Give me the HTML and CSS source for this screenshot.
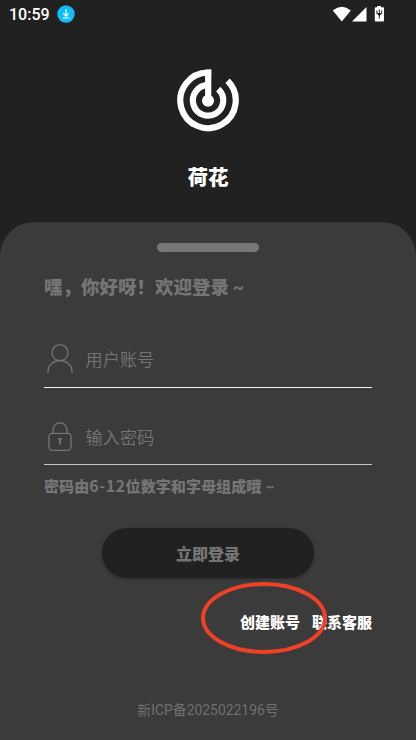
FILE: index.html
```
<!DOCTYPE html>
<html lang="zh-CN">
<head>
<meta charset="utf-8">
<title>荷花</title>
<link rel="stylesheet" href="styles.css">
</head>
<body>
<div class="screen">
  <header class="status">
    <span class="time">10:59</span>
    <svg class="download" viewBox="0 0 18 18"><circle cx="9" cy="9" r="8.7" fill="#10bdfb"/><path d="M9 4v7M6.2 8.3L9 11.1l2.8-2.8M5.6 13h6.8" fill="none" stroke="#fff" stroke-width="1.2"/></svg>
    <svg class="signals" viewBox="0 0 54 18"><path d="M.8 5.5Q9.8-1.9 18.8 5.5L9.8 16.4z" fill="#fff"/><path d="M34.5 2v14.4H20z" fill="#fff"/><path d="M45 2.2V1h4v1.2h2q1 0 1 1v12.2q0 1-1 1h-7.2q-1 0-1-1V3.2q0-1 1-1z" fill="#fff"/><path d="M47.3 4.5v9M44.9 5.5v3M49.7 5.5v3" fill="none" stroke="#222" stroke-width="1"/><path d="M44.4 8h5.8l-2.9 3.2z" fill="#222"/></svg>
  </header>
  <section class="brand">
    <svg class="logo" viewBox="-32 -32.4 64 64" fill="none" stroke="#fff" stroke-width="6.2">
      <path d="M3.2-27.7H0A27.7 27.7 0 1 0 19.6-19.6"/>
      <path d="M0-15.2A15.2 15.2 0 1 0 10.2-11.3"/>
      <path d="M.2-30.8V0"/>
      <circle cx="0" cy=".3" r="6" fill="#fff" stroke="none"/>
    </svg>
    <h1 class="name">荷花</h1>
  </section>
  <main class="panel">
    <div class="handle"></div>
    <h2 class="welcome">嘿，你好呀！欢迎登录<span class="tilde">~</span></h2>
    <div class="field">
      <svg class="icon" viewBox="0 0 28 32"><circle cx="14" cy="9.7" r="8"/><path d="M2 30v-1.5a12 11 0 0 1 24 0V30"/></svg>
      <span class="placeholder">用户账号</span>
    </div>
    <div class="field password">
      <svg class="icon" viewBox="0 0 28 32"><rect x="3" y="12.3" width="22" height="17" rx="3.5"/><path d="M7 12V8.8a7 7 0 0 1 14 0V12"/><path class="key" d="M14 17v6.5M12.3 18h3.4"/></svg>
      <span class="placeholder">输入密码</span>
    </div>
    <p class="hint">密码由<span class="digits">6-12</span>位数字和字母组成哦<span class="tilde">~</span></p>
    <div class="login">立即登录</div>
    <nav class="links"><span class="create">创建账号<svg class="mark" viewBox="0 0 128 74"><ellipse cx="64" cy="37" rx="61" ry="34"/></svg></span><span>联系客服</span></nav>
    <footer class="icp">新ICP备2025022196号</footer>
  </main>
</div>
</body>
</html>
```
FILE: styles.css
```
* { box-sizing: border-box; }
body { margin: 0; background: #212121; font-family: Roboto, "Noto Sans CJK SC", sans-serif; }
.screen { width: 416px; height: 740px; display: flex; flex-direction: column; overflow: hidden; }
.status { height: 28px; display: flex; align-items: center; padding: 0 30px 0 9px; color: #fff; }
.time { font-size: 16px; font-weight: 500; width: 47.5px; white-space: nowrap; }
.download { width: 18px; height: 18px; }
.signals { width: 54px; height: 18px; margin-left: auto; }
.brand { height: 194px; padding-top: 40px; display: flex; flex-direction: column; align-items: center; }
.logo { width: 64px; height: 64px; }
.name { margin: 31px 0 0; color: #fff; font-size: 20.5px; line-height: 30px; font-weight: 900; }
.panel { flex: 1; background: #3b3b3b; border-radius: 34px; border-bottom-left-radius: 0; border-bottom-right-radius: 0; padding: 21px 44px 0; display: flex; flex-direction: column; color: #757575; }
.handle { width: 102px; height: 9px; border-radius: 4.5px; background: #777; align-self: center; }
.welcome { margin: 21px 0 0; font-size: 18.5px; line-height: 30px; font-weight: 900; white-space: nowrap; }
.tilde { margin-left: 4px; font-weight: 700; font-size: .9em; position: relative; top: -1px; }
.field { height: 57px; margin-top: 27px; border-bottom: 1px solid #f0f0f0; display: flex; align-items: center; font-size: 17.2px; gap: 11.5px; padding: 0 0 0 2px; }
.placeholder { padding-bottom: 1px; font-weight: 350; }
.password { height: 56px; margin-top: 21px; border-color: #c6c6c6; }
.icon { width: 28px; height: 32px; fill: none; stroke: #757575; stroke-width: 1.3; }
.key { stroke-width: 1.8; }
.hint { margin: 10px 0 0; font-size: 15.1px; line-height: 24px; font-weight: 900; white-space: nowrap; }
.digits { font-family: "Noto Sans CJK SC", sans-serif; font-weight: 700; font-size: 16px; line-height: 1; letter-spacing: .5px; }
.login { align-self: center; width: 212px; height: 50px; margin-top: 29px; border-radius: 25px; background: #212121; box-shadow: 0 1px 3px #292929; font-size: 16px; font-weight: 900; display: flex; align-items: center; justify-content: center; }
.links { margin-top: 33px; display: flex; justify-content: flex-end; gap: 12px; color: #fff; font-size: 15px; line-height: 24px; font-weight: 900; }
.create { position: relative; }
.mark { position: absolute; left: -40px; top: -30px; width: 128px; height: 74px; fill: none; stroke: #ef4126; stroke-width: 4; }
.icp { margin-top: 63px; font-size: 13.9px; line-height: 24px; font-weight: 400; text-align: center; color: #707070; }
```
